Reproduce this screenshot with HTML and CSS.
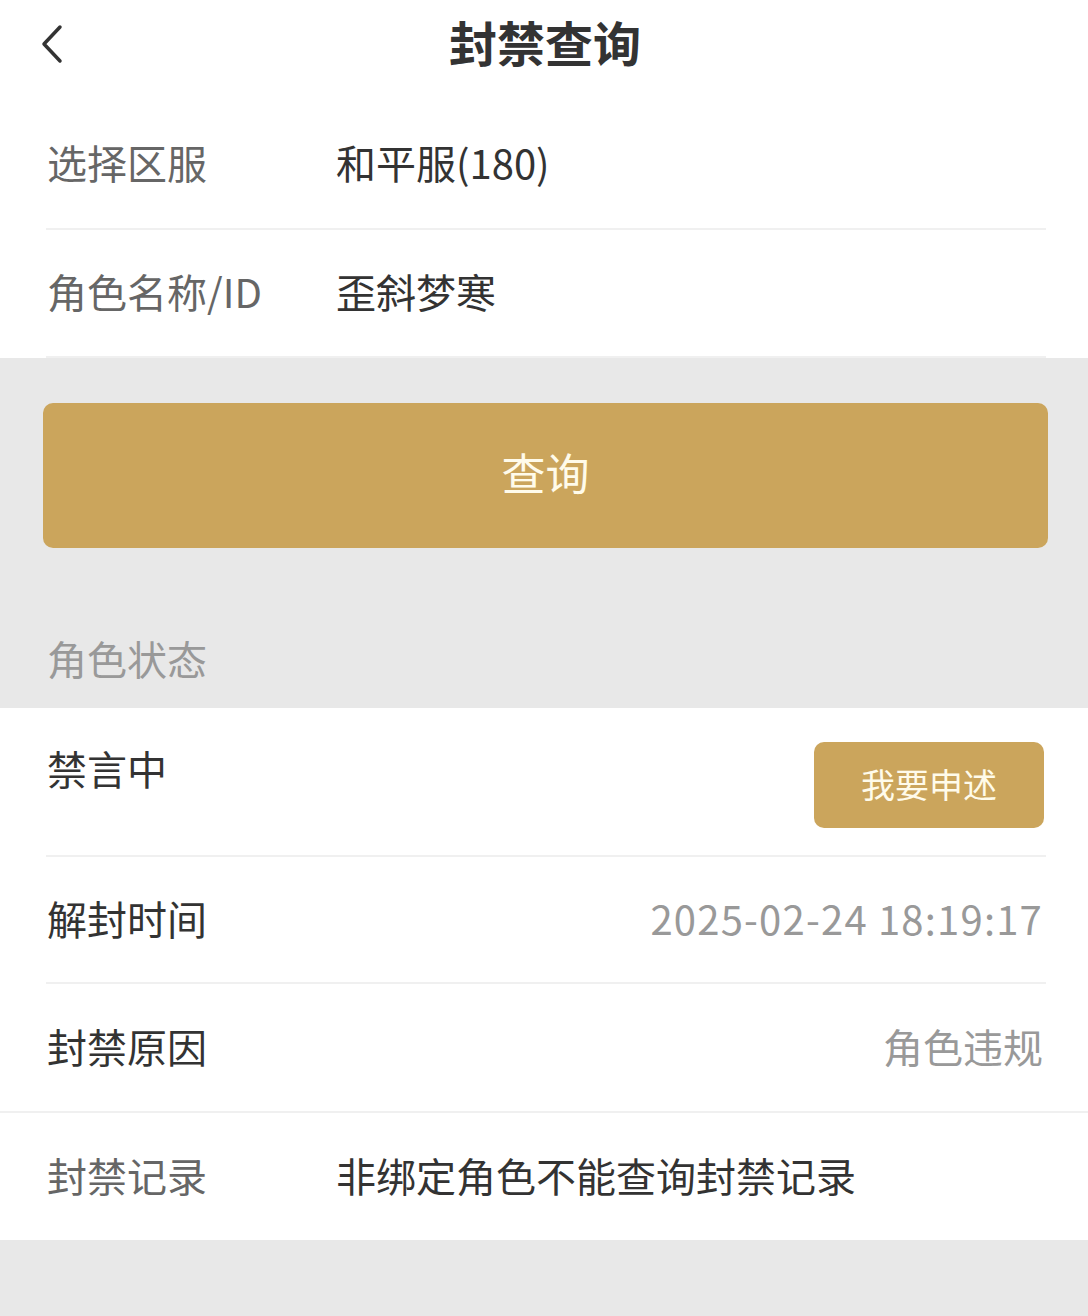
FILE: index.html
```html
<!DOCTYPE html>
<html lang="zh-CN">
<head>
    <meta charset="UTF-8">
    <meta name="viewport" content="width=device-width, initial-scale=1.0">
    <title>封禁查询</title>
    <link rel="stylesheet" href="styles.css">
</head>
<body>

    <div class="header">
        <svg class="back" width="24" height="40" viewBox="0 0 24 40">
            <path d="M20 3 L4 20 L20 37" fill="none" stroke="#333" stroke-width="3.5" stroke-linecap="round" stroke-linejoin="round"/>
        </svg>
        <h1 class="title">封禁查询</h1>
    </div>

    <div class="form">
        <div class="row">
            <span class="label">选择区服</span>
            <span class="value">和平服(180)</span>
        </div>
        <div class="row">
            <span class="label">角色名称/ID</span>
            <span class="value">歪斜梦寒</span>
        </div>
    </div>

    <div class="actions">
        <button class="query-btn">查询</button>
        <p class="section-title">角色状态</p>
    </div>

    <div class="status">
        <div class="row row-top">
            <span class="label dark">禁言中</span>
            <button class="appeal-btn">我要申述</button>
        </div>
        <div class="row">
            <span class="label dark">解封时间</span>
            <span class="value muted date">2025-02-24 18:19:17</span>
        </div>
        <div class="row no-border">
            <span class="label dark">封禁原因</span>
            <span class="value muted">角色违规</span>
        </div>
        <div class="record">
            <div class="row no-border">
                <span class="label">封禁记录</span>
                <span class="value">非绑定角色不能查询封禁记录</span>
            </div>
        </div>
    </div>

</body>
</html>
```

FILE: styles.css
```css
body {
    margin: 0;
    font-family: "Noto Sans CJK SC", "Noto Sans", sans-serif;
    background-color: #e8e8e8;
    color: #333;
}
.header {
    position: relative;
    height: 100px;
    background-color: #fff;
    display: flex;
    align-items: center;
    justify-content: center;
}
.back {
    position: absolute;
    left: 40px;
    top: 24px;
}
.title {
    margin: 0 0 18px 2px;
    font-size: 48px;
    font-weight: 700;
    color: #333;
    line-height: 1;
}
.form,
.status {
    background-color: #fff;
}
.row {
    margin: 0 42px 0 46px;
    height: 127px;
    display: flex;
    align-items: center;
    border-bottom: 2px solid #f0f0f0;
    box-sizing: border-box;
    font-size: 40px;
}
.form .row:first-child {
    height: 130px;
}
.form .row:last-child {
    height: 128px;
}
.row.no-border {
    border-bottom: none;
}
.label {
    width: 290px;
    flex-shrink: 0;
    color: #666;
    padding-left: 1px;
    margin-bottom: 4px;
}
.label.dark {
    color: #333;
}
.value {
    color: #333;
    margin-left: -1px;
    margin-bottom: 4px;
}
.value.muted {
    margin-left: auto;
    color: #999;
    padding-right: 3px;
}
.date {
    letter-spacing: 1.2px;
}
.actions {
    padding: 45px 40px 0 43px;
    height: 350px;
    box-sizing: border-box;
}
.query-btn {
    display: block;
    width: 100%;
    height: 145px;
    padding-bottom: 8px;
    border: none;
    border-radius: 10px;
    background-color: #cba55c;
    color: #fffbea;
    font-family: inherit;
    font-size: 44px;
}
.section-title {
    margin: 0;
    padding-top: 84px;
    font-size: 40px;
    line-height: 52px;
    color: #999;
    padding-left: 4px;
}
.row-top {
    height: 149px;
    align-items: flex-start;
    padding-top: 34px;
}
.row-top .label {
    line-height: 52px;
}
.appeal-btn {
    margin-left: auto;
    margin-right: 2px;
    width: 230px;
    height: 86px;
    padding-bottom: 4px;
    border: none;
    border-radius: 10px;
    background-color: #cba55c;
    color: #fffbea;
    font-family: inherit;
    font-size: 34px;
}
.record {
    border-top: 2px solid #f0f0f0;
}
.record .row {
    height: 127px;
}
```
